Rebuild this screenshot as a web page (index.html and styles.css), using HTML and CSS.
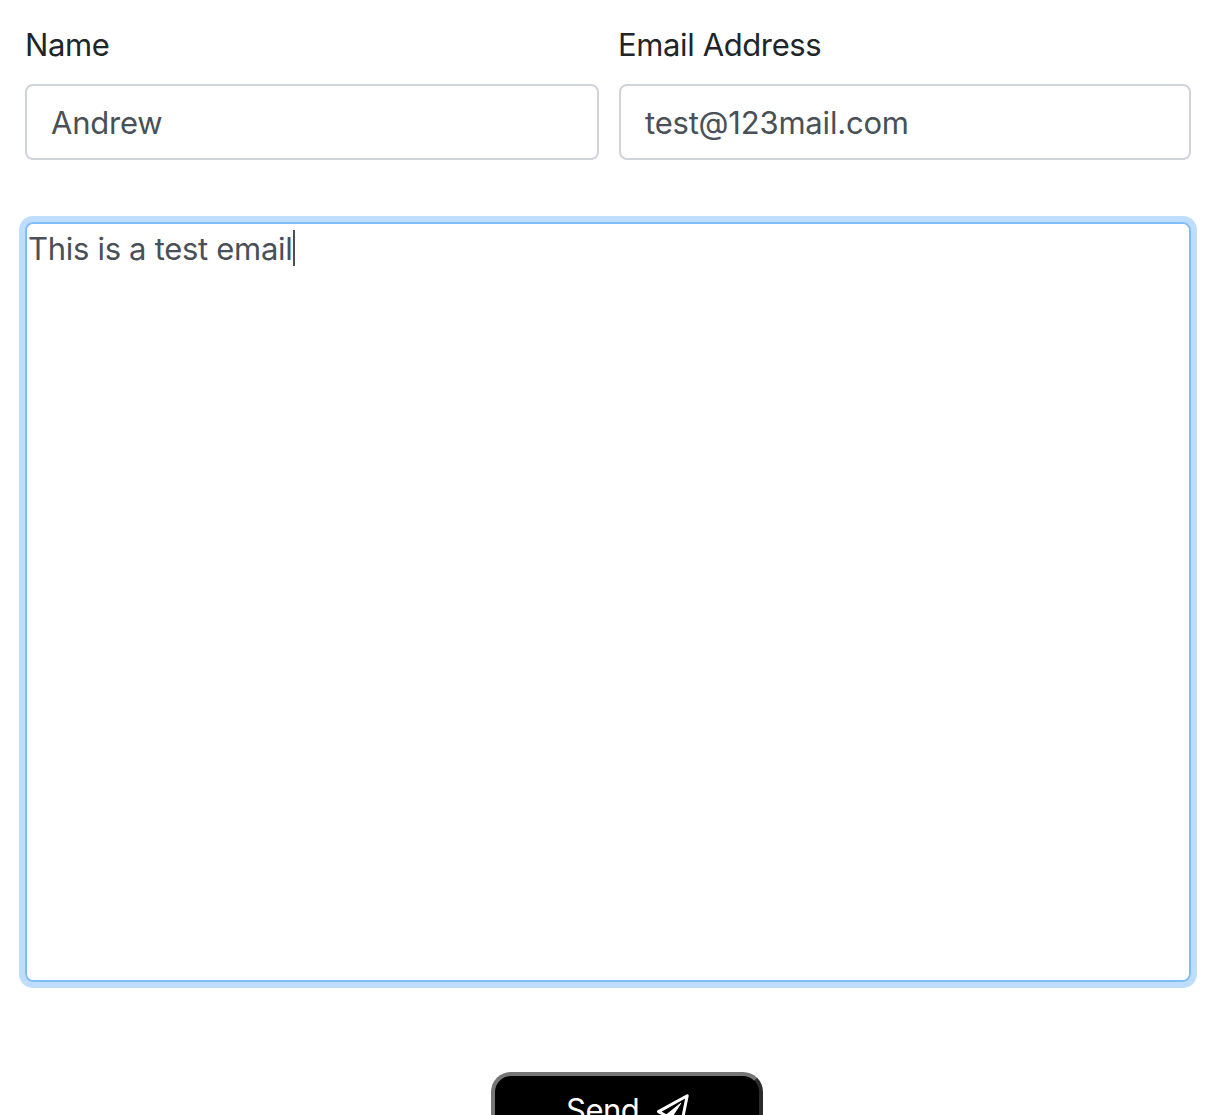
FILE: index.html
```html
<!DOCTYPE html>
<html lang="en">
<head>
<meta charset="utf-8">
<title>Contact</title>
<link rel="stylesheet" href="styles.css">
</head>
<body>
<form class="contact">
  <div class="fields">
    <div class="field">
      <label class="label"><span class="label-name">Name</span></label>
      <div class="control"><span class="value-name">Andrew</span></div>
    </div>
    <div class="field">
      <label class="label"><span class="label-email">Email Address</span></label>
      <div class="control"><span class="value-email">test@123mail.com</span></div>
    </div>
  </div>
  <div class="message"><span class="message-text">This is a test email</span><span class="caret"></span></div>
  <button class="send" type="button">
    <span class="send-text">Send</span>
    <svg class="plane" viewBox="0 0 34 34" fill="none" stroke="#fff" stroke-width="3" stroke-linejoin="round" stroke-linecap="round">
      <path d="M31.2 2.8 2.5 18.6 9.5 22.5 26 28.5Z"/>
      <path d="M24.5 10.5 9.5 22.5V32L15 25.5Z" fill="#fff" stroke-width="1"/>
    </svg>
  </button>
</form>
</body>
</html>
```
FILE: styles.css
```css
* { box-sizing: border-box; }
html, body { height: 100%; }
body {
  margin: 0;
  overflow: hidden;
  background: #fff;
  color: #212529;
  font: 420 31px/48px Inter, "Liberation Sans", sans-serif;
}
.contact {
  display: flex;
  flex-direction: column;
  padding: 21px 25px 0;
}
.fields {
  display: grid;
  grid-template-columns: 574px 572px;
  column-gap: 20px;
}
.field { display: flex; flex-direction: column; }
.label {
  height: 48px;
  margin-bottom: 15px;
  letter-spacing: -0.38px;
  white-space: nowrap;
}
.label-email { margin-left: -1px; }
.control {
  height: 76px;
  padding: 13px 24px;
  border: 2px solid #ced4da;
  border-radius: 8px;
  color: #495057;
  letter-spacing: -0.2px;
  white-space: nowrap;
}
.message {
  display: flex;
  height: 760px;
  margin-top: 62px;
  padding: 1px 1px 0;
  border: 2px solid #80bdff;
  border-radius: 8px;
  box-shadow: 0 0 0 6px #bfdeff;
  color: #495057;
  letter-spacing: -0.3px;
  white-space: nowrap;
}
.message-text { width: 265px; }
.caret {
  width: 2px;
  height: 36px;
  margin-top: 5px;
  background: #495057;
}
.send {
  display: flex;
  align-self: flex-start;
  width: 272px;
  height: 84px;
  margin: 90px 0 0 466px;
  padding: 10px 0 0 71px;
  border: 4px solid #2c2c2c;
  border-top-color: #767676;
  border-left-color: #767676;
  border-radius: 20px;
  background: #000;
  color: #fff;
  font: inherit;
  letter-spacing: -0.5px;
}
.send-text { width: 73px; }
.plane {
  width: 34px;
  height: 34px;
  margin: 7px 0 0 17px;
}
```
